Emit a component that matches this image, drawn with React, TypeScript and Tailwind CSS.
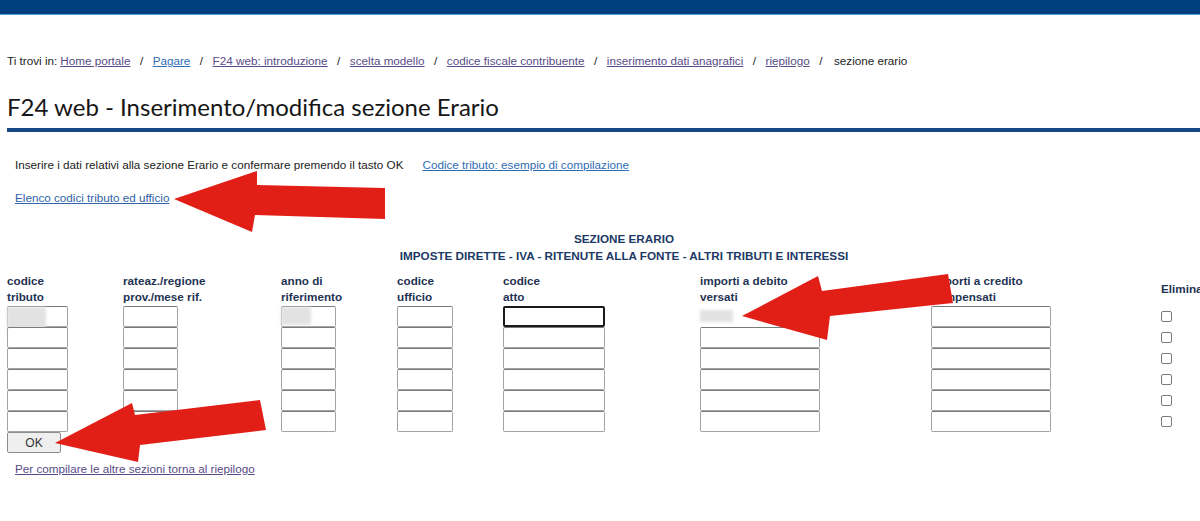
const crumbs = [
  { label: "Home portale", color: "text-[#584c86]" },
  { label: "Pagare", color: "text-[#2f6db3]" },
  { label: "F24 web: introduzione", color: "text-[#584c86]" },
  { label: "scelta modello", color: "text-[#584c86]" },
  { label: "codice fiscale contribuente", color: "text-[#584c86]" },
  { label: "inserimento dati anagrafici", color: "text-[#584c86]" },
  { label: "riepilogo", color: "text-[#584c86]" },
];

const columns = [
  { first: "codice", second: "tributo", cell: "w-[116px]", input: "w-[61px]" },
  { first: "rateaz./regione", second: "prov./mese rif.", cell: "w-[158px]", input: "w-[55px]" },
  { first: "anno di", second: "riferimento", cell: "w-[116px]", input: "w-[55px]" },
  { first: "codice", second: "ufficio", cell: "w-[106px]", input: "w-[56px]" },
  { first: "codice", second: "atto", cell: "w-[197px]", input: "w-[102px]" },
  { first: "importi a debito", second: "versati", cell: "w-[231px]", input: "w-[120px]" },
  { first: "importi a credito", second: "compensati", cell: "w-[230px]", input: "w-[120px]" },
];

const rows = [0, 1, 2, 3, 4, 5];

function Redacted({ className }: { className: string }) {
  return (
    <div className={`pointer-events-none absolute bg-[#e2e2e2] blur-[1.5px] ${className}`} />
  );
}

function FieldColumn({ index }: { index: number }) {
  const col = columns[index];
  return (
    <div className={`flex shrink-0 flex-col ${col.cell}`}>
      <div className="h-[32px] font-bold leading-[16px] text-[#1f3354]">
        <div>{col.first}</div>
        <div>{col.second}</div>
      </div>
      <div className="mt-[1px]">
        {rows.map((row) => {
          const focused = index === 4 && row === 0;
          const hidden = index === 5 && row === 0;
          return (
            <div key={row} className="relative h-[21px]">
              <input
                type="text"
                className={`block h-[21px] rounded-[2px] bg-white outline-none ${col.input} ${
                  focused
                    ? "border-2 border-[#1a1a1a]"
                    : hidden
                      ? "border border-white"
                      : "border border-[#a3a3a3] border-t-[#7a7a7a]"
                }`}
              />
              {row === 0 && index === 0 ? (
                <Redacted className="left-0 top-[1px] h-[25px] w-[39px]" />
              ) : null}
              {row === 0 && index === 2 ? (
                <Redacted className="left-0 top-[1px] h-[18px] w-[30px]" />
              ) : null}
              {row === 0 && index === 5 ? (
                <Redacted className="left-0 top-[4px] h-[12px] w-[33px]" />
              ) : null}
            </div>
          );
        })}
      </div>
      {index === 0 ? (
        <button
          type="button"
          className="h-[21px] w-[54px] rounded-[2px] border border-[#8d8d8d] bg-[#efefef] text-[12px] text-[#333]"
        >
          OK
        </button>
      ) : null}
    </div>
  );
}

function Arrows() {
  return (
    <svg
      className="pointer-events-none absolute left-0 top-0"
      width="1200"
      height="521"
      viewBox="0 0 1200 521"
    >
      <polygon
        fill="#e21f17"
        points="174,199 257,171 257,185 385,188 385,219 255,215 252,232"
      />
      <polygon
        fill="#e21f17"
        points="742,316 818,276 822,291 948,274 953,303 830,316 827,340"
      />
      <polygon
        fill="#e21f17"
        points="55,443 132,403 135,415 260,400 266,430 140,445 138,462"
      />
    </svg>
  );
}

export default function App() {
  return (
    <div className="relative h-[521px] w-[1200px] overflow-hidden bg-white font-['Liberation_Sans',Arial,sans-serif] text-[11.7px] text-[#222]">
      <div className="h-[15px] border-b border-[#56a3e2] bg-[#00407e]" />

      <nav className="mt-[39px] flex pl-[7px] leading-[14px] text-[#222]">
        <span className="mr-[3px]">Ti trovi in:</span>
        {crumbs.map((c) => (
          <span key={c.label} className="flex">
            <a href="#" className={`underline ${c.color}`}>
              {c.label}
            </a>
            <span className="mx-[9.5px]">/</span>
          </span>
        ))}
        <span className="ml-[2px]">sezione erario</span>
      </nav>

      <h1 className="mt-[25px] pl-[7px] font-['Lato','Open_Sans',sans-serif] text-[24px] leading-[28px] text-[#161616]">
        F24 web - Inserimento/modifica sezione Erario
      </h1>
      <div className="ml-[7px] mt-[7px] h-[4px] bg-[#174a84]" />

      <div className="mt-[26px] flex pl-[15px] leading-[14px]">
        <span>Inserire i dati relativi alla sezione Erario e confermare premendo il tasto OK</span>
        <a href="#" className="ml-[19px] text-[#2f6db3] underline">
          Codice tributo: esempio di compilazione
        </a>
      </div>

      <div className="mt-[19px] pl-[15px] leading-[14px]">
        <a href="#" className="text-[#2f63a6] underline">
          Elenco codici tributo ed ufficio
        </a>
      </div>

      <div className="mt-[25px] pl-[48px] text-center font-bold leading-[17px] text-[#1d3a66]">
        <div>SEZIONE ERARIO</div>
        <div>IMPOSTE DIRETTE - IVA - RITENUTE ALLA FONTE - ALTRI TRIBUTI E INTERESSI</div>
      </div>

      <div className="mt-[9px] flex pl-[7px]">
        {columns.map((_, i) => (
          <FieldColumn key={i} index={i} />
        ))}
        <div className="flex shrink-0 flex-col">
          <div className="flex h-[32px] items-center font-bold text-[#1f3354]">Elimina</div>
          <div className="mt-[1px]">
            {rows.map((row) => (
              <div key={row} className="flex h-[21px] items-center">
                <input
                  type="checkbox"
                  className="h-[11px] w-[11px] appearance-none rounded-[2px] border border-[#7a7a7a] bg-white"
                />
              </div>
            ))}
          </div>
        </div>
      </div>

      <div className="mt-[9px] pl-[15px] leading-[14px]">
        <a href="#" className="text-[#584c86] underline">
          Per compilare le altre sezioni torna al riepilogo
        </a>
      </div>

      <Arrows />
    </div>
  );
}
